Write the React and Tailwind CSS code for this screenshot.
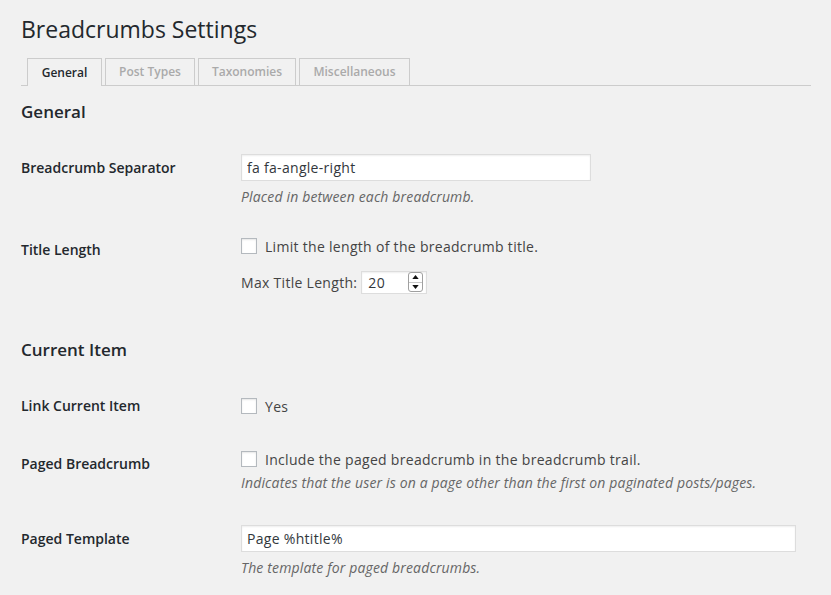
import { useState } from 'react';

const TABS = [
  { label: 'General', width: 'w-[75px]' },
  { label: 'Post Types', width: 'w-[90px]' },
  { label: 'Taxonomies', width: 'w-[98px]' },
  { label: 'Miscellaneous', width: 'w-[111px]' },
];

function Checkbox({ checked, onChange }) {
  return (
    <button
      type="button"
      onClick={() => onChange(!checked)}
      className="mt-[2px] flex h-4 w-4 shrink-0 items-center justify-center border border-[#b4b9be] bg-white shadow-[inset_0_1px_2px_rgba(0,0,0,0.1)]"
    >
      {checked && (
        <svg viewBox="0 0 16 16" className="h-3 w-3 text-[#1e8cbe]">
          <path d="M3 8l3 3 7-7" fill="none" stroke="currentColor" strokeWidth="2" />
        </svg>
      )}
    </button>
  );
}

function CheckLine({ label, checked, onChange }) {
  return (
    <label className="flex h-5 items-start gap-[8px]">
      <Checkbox checked={checked} onChange={onChange} />
      <span className="mt-px leading-[20px]">{label}</span>
    </label>
  );
}

function Description({ children, className = '' }) {
  return (
    <p className={`text-[14px] italic leading-[19px] tracking-[0.15px] text-[#666] ${className}`}>{children}</p>
  );
}

function Label({ children }) {
  return (
    <div className="w-[220px] shrink-0 pt-[20px] text-[14px] font-semibold leading-[18px] tracking-normal text-[#23282d]">
      {children}
    </div>
  );
}

export default function App() {
  const [tab, setTab] = useState('General');
  const [separator, setSeparator] = useState('fa fa-angle-right');
  const [limitTitle, setLimitTitle] = useState(false);
  const [maxLength, setMaxLength] = useState(20);
  const [linkCurrent, setLinkCurrent] = useState(false);
  const [paged, setPaged] = useState(false);
  const [template, setTemplate] = useState('Page %htitle%');

  return (
    <div className="min-h-[595px] bg-[#f1f1f1] pl-[21px] pr-[20px] font-['Open_Sans','Noto_Sans',sans-serif] text-[14px] tracking-[0.3px] text-[#444]">
      <h1 className="pt-[15px] text-[23px] font-normal leading-[29px] tracking-normal text-[#23282d]">
        Breadcrumbs Settings
      </h1>

      {/* Tabs */}
      <div className="mt-[14px] flex gap-[3px] border-b border-[#ccc] pl-[6px]">
        {TABS.map((t) => {
          const active = tab === t.label;
          return (
            <button
              key={t.label}
              type="button"
              onClick={() => setTab(t.label)}
              className={`${t.width} border border-b-0 border-[#ccc] text-center text-[12px] font-semibold leading-[26px] tracking-normal ${
                active
                  ? 'relative -mb-px h-[28px] bg-[#f1f1f1] text-[#23282d]'
                  : 'h-[27px] bg-[#f1f1f1] text-[#aaa]'
              }`}
            >
              {t.label}
            </button>
          );
        })}
      </div>

      <h2 className="mt-[15px] text-[17px] font-semibold leading-[22px] tracking-normal text-[#23282d]">General</h2>

      {/* Breadcrumb Separator */}
      <div className="mt-[16px] flex">
        <Label>Breadcrumb Separator</Label>
        <div className="pb-[15px] pt-[15px]">
          <input
            value={separator}
            onChange={(e) => setSeparator(e.target.value)}
            className="h-[27px] w-[350px] border border-[#ddd] bg-white px-[5px] text-[14px] text-[#32373c] shadow-[inset_0_1px_2px_rgba(0,0,0,0.07)] outline-none"
          />
          <Description className="mt-[6px]">Placed in between each breadcrumb.</Description>
        </div>
      </div>

      {/* Title Length */}
      <div className="flex">
        <Label>Title Length</Label>
        <div className="pb-[15px] pt-[15px]">
          <div className="h-[22px]">
            <CheckLine
              label="Limit the length of the breadcrumb title."
              checked={limitTitle}
              onChange={setLimitTitle}
            />
          </div>
          <div className="mt-[13px] flex h-[23px] items-center gap-[4px]">
            <span className="leading-[22px]">Max Title Length:</span>
            <div className="relative flex h-[23px] w-[66px] items-center border border-[#ddd] bg-white pl-[6px] shadow-[inset_0_1px_2px_rgba(0,0,0,0.07)]">
              <input
                value={maxLength}
                onChange={(e) => setMaxLength(e.target.value)}
                className="w-[36px] bg-transparent text-[14px] text-[#32373c] outline-none"
              />
              <div className="absolute right-[3px] top-[0px] flex h-[20px] w-[15px] flex-col overflow-hidden rounded-[3px] border border-[#a0a0a0] bg-white">
                <button
                  type="button"
                  onClick={() => setMaxLength((v) => Number(v) + 1)}
                  className="flex flex-1 items-center justify-center border-b border-[#c8c8c8]"
                >
                  <svg viewBox="0 0 8 5" className="h-[4px] w-[7px]">
                    <path d="M4 0L8 5H0z" fill="#111" />
                  </svg>
                </button>
                <button
                  type="button"
                  onClick={() => setMaxLength((v) => Math.max(0, Number(v) - 1))}
                  className="flex flex-1 items-center justify-center"
                >
                  <svg viewBox="0 0 8 5" className="h-[4px] w-[7px]">
                    <path d="M0 0H8L4 5z" fill="#111" />
                  </svg>
                </button>
              </div>
            </div>
          </div>
        </div>
      </div>

      <h2 className="mt-[30px] text-[17px] font-semibold leading-[22px] tracking-normal text-[#23282d]">Current Item</h2>

      {/* Link Current Item */}
      <div className="mt-[16px] flex">
        <Label>Link Current Item</Label>
        <div className="pb-[19px] pt-[19px]">
          <CheckLine label="Yes" checked={linkCurrent} onChange={setLinkCurrent} />
        </div>
      </div>

      {/* Paged Breadcrumb */}
      <div className="flex">
        <Label>Paged Breadcrumb</Label>
        <div className="pb-[18px] pt-[14px]">
          <CheckLine
            label="Include the paged breadcrumb in the breadcrumb trail."
            checked={paged}
            onChange={setPaged}
          />
          <Description className="mt-[4px]">
            Indicates that the user is on a page other than the first on paginated posts/pages.
          </Description>
        </div>
      </div>

      {/* Paged Template */}
      <div className="flex">
        <Label>Paged Template</Label>
        <div className="pb-[15px] pt-[15px]">
          <input
            value={template}
            onChange={(e) => setTemplate(e.target.value)}
            className="h-[27px] w-[555px] border border-[#ddd] bg-white px-[5px] text-[14px] text-[#32373c] shadow-[inset_0_1px_2px_rgba(0,0,0,0.07)] outline-none"
          />
          <Description className="mt-[6px]">The template for paged breadcrumbs.</Description>
        </div>
      </div>
    </div>
  );
}
